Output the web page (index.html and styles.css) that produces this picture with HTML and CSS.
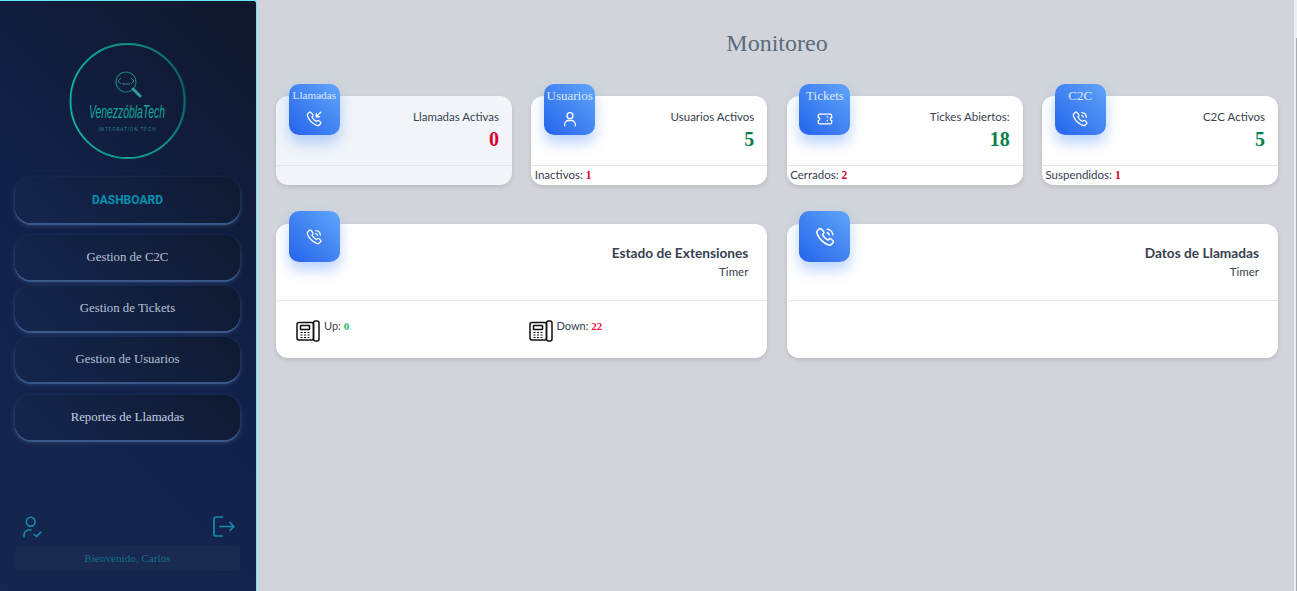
FILE: index.html

```html
<!DOCTYPE html>
<html lang="es">
<head>
  <meta charset="UTF-8" />
  <title>Monitoreo</title>
  <link rel="stylesheet" href="styles.css">
</head>
<body>

  <aside class="sidebar">
    <svg class="logo" viewBox="0 0 120 120" width="120" height="120">
      <defs>
        <linearGradient id="aro" x1="0" y1="0.600" x2="1" y2="0.300">
          <stop offset="0" stop-color="#12c4b4"/>
          <stop offset="0.600" stop-color="#0fa89e"/>
          <stop offset="1" stop-color="#0b5f68"/>
        </linearGradient>
      </defs>
      <circle cx="59.500" cy="58" r="57" fill="none" stroke="url(#aro)" stroke-width="1.800"/>
      <circle cx="60.500" cy="58" r="57.500" fill="none" stroke="#0d5f68" stroke-width="0.600"/>
      <circle cx="58" cy="39" r="10" fill="none" stroke="#0d7f7c" stroke-width="1.200"/>
      <path d="M53 35l-3 3 3 3M63 35l3 3-3 3M54 41h8" fill="none" stroke="#3f9c9c" stroke-width="0.800"/>
      <path d="M65 46l7 7" stroke="#2f9a9a" stroke-width="3" stroke-linecap="round"/>
      <text class="logo-name" x="59" y="75" text-anchor="middle" textLength="76" lengthAdjust="spacingAndGlyphs">VenezzóblaTech</text>
      <text class="logo-sub" x="59" y="88" text-anchor="middle" textLength="57">INTEGRATION TECH</text>
    </svg>

    <nav class="menu">
      <a class="menu-item activo" href="#">DASHBOARD</a>
      <a class="menu-item" href="#">Gestion de C2C</a>
      <a class="menu-item" href="#">Gestion de Tickets</a>
      <a class="menu-item" href="#">Gestion de Usuarios</a>
      <a class="menu-item reportes" href="#">Reportes de Llamadas</a>
    </nav>

    <div class="pie">
      <div class="pie-iconos">
        <svg viewBox="0 0 24 24" width="24" height="24" fill="none" stroke="#0e8fb0" stroke-width="1.600" stroke-linecap="round" stroke-linejoin="round">
          <circle cx="9.700" cy="6.700" r="4.400"/>
          <path d="M3 22v-2a5 5 0 0 1 5-5h2"/>
          <path d="M13 19.500l2.500 2 4.500-4.500"/>
        </svg>
        <svg viewBox="0 0 24 24" width="24" height="24" fill="none" stroke="#0e8fb0" stroke-width="1.700" stroke-linecap="round" stroke-linejoin="round">
          <path d="M10.500 2H4a2 2 0 0 0-2 2v15a2 2 0 0 0 2 2h6.500"/>
          <path d="M8 11.500h14M18 7.500l4 4-4 4"/>
        </svg>
      </div>
      <div class="bienvenido">Bienvenido, Carlos</div>
    </div>
  </aside>

  <main class="contenido">
    <h1 class="titulo">Monitoreo</h1>

    <section class="fila-cuatro">
      <div class="card gris">
        <div class="icono-caja">
          <span class="chico">Llamadas</span>
          <svg class="ico" viewBox="0 0 24 24"><path d="M9.200 4.500 7.600 3.100c-.6-.5-1.400-.5-2 .1L3.900 4.900c-.9.900-1.100 2.200-.6 3.400 2.300 5.500 6.800 10 12.300 12.300 1.200.5 2.500.3 3.400-.6l1.700-1.700c.6-.6.6-1.400.1-2l-2.300-2.100c-.6-.5-1.400-.5-2 0l-1.300 1.200c-2.500-1.200-4.800-3.500-6-6l1.200-1.300c.5-.6.5-1.400 0-2z"/><path d="M21 3l-6 6M15 4.500V9h4.500"/></svg>
        </div>
        <div class="card-top">
          <p class="etiqueta">Llamadas Activas</p>
          <p class="numero rojo">0</p>
        </div>
        <div class="card-pie"></div>
      </div>

      <div class="card">
        <div class="icono-caja">
          <span>Usuarios</span>
          <svg class="ico" viewBox="0 0 24 24"><circle cx="12" cy="7.500" r="4"/><path d="M5 21v-2a5 5 0 0 1 5-5h4a5 5 0 0 1 5 5v2"/></svg>
        </div>
        <div class="card-top">
          <p class="etiqueta">Usuarios Activos</p>
          <p class="numero verde">5</p>
        </div>
        <div class="card-pie">Inactivos: <b class="rojo">1</b></div>
      </div>

      <div class="card">
        <div class="icono-caja">
          <span>Tickets</span>
          <svg class="ico" viewBox="0 0 24 24"><path d="M5 5.500h14a2 2 0 0 1 2 2v2.500a2 2 0 0 0 0 4v2.500a2 2 0 0 1-2 2H5a2 2 0 0 1-2-2V14a2 2 0 0 0 0-4V7.500a2 2 0 0 1 2-2z"/><path d="M15 9v.5M15 14v.5"/></svg>
        </div>
        <div class="card-top">
          <p class="etiqueta">Tickes Abiertos:</p>
          <p class="numero verde">18</p>
        </div>
        <div class="card-pie">Cerrados: <b class="rojo">2</b></div>
      </div>

      <div class="card">
        <div class="icono-caja">
          <span>C2C</span>
          <svg class="ico" viewBox="0 0 24 24"><path d="M9.200 4.500 7.600 3.100c-.6-.5-1.400-.5-2 .1L3.900 4.900c-.9.900-1.100 2.200-.6 3.400 2.300 5.500 6.800 10 12.300 12.300 1.200.5 2.500.3 3.400-.6l1.700-1.700c.6-.6.6-1.400.1-2l-2.300-2.100c-.6-.5-1.400-.5-2 0l-1.300 1.200c-2.500-1.200-4.800-3.500-6-6l1.200-1.300c.5-.6.5-1.400 0-2z"/><path d="M14.500 3.500a6.500 6.500 0 0 1 6 6M14.500 7.500a2.500 2.500 0 0 1 2 2"/></svg>
        </div>
        <div class="card-top">
          <p class="etiqueta">C2C Activos</p>
          <p class="numero verde">5</p>
        </div>
        <div class="card-pie">Suspendidos: <b class="rojo">1</b></div>
      </div>
    </section>

    <section class="fila-dos">
      <div class="card grande">
        <div class="icono-caja solo">
          <svg class="ico" viewBox="0 0 24 24"><path d="M9.200 4.500 7.600 3.100c-.6-.5-1.400-.5-2 .1L3.900 4.900c-.9.900-1.100 2.200-.6 3.400 2.300 5.500 6.800 10 12.300 12.300 1.200.5 2.500.3 3.400-.6l1.700-1.700c.6-.6.6-1.400.1-2l-2.300-2.100c-.6-.5-1.400-.5-2 0l-1.300 1.200c-2.500-1.200-4.800-3.500-6-6l1.200-1.300c.5-.6.5-1.400 0-2z"/><path d="M14.500 3.500a6.500 6.500 0 0 1 6 6M14.500 7.500a2.500 2.500 0 0 1 2 2"/></svg>
        </div>
        <div class="grande-top">
          <p class="grande-titulo">Estado de Extensiones</p>
          <p class="timer">Timer</p>
        </div>
        <div class="grande-pie">
          <div class="extension">
            <svg class="telefono" viewBox="0 0 24 22" width="24" height="22" fill="none" stroke="#111" stroke-width="1.500" stroke-linejoin="round">
              <rect x="1" y="2.500" width="16.500" height="17.500" rx="2"/>
              <rect x="17.500" y="1" width="5.500" height="20" rx="2"/>
              <rect x="4.500" y="5.500" width="9" height="4" rx="0.500"/>
              <path d="M4.500 12.500h2M8 12.500h2M11.500 12.500h2M4.500 15h2M8 15h2M11.500 15h2M4.500 17.500h2M8 17.500h2M11.500 17.500h2" stroke-width="1.200"/>
            </svg>
            <span>Up: <b class="verde-claro">0</b></span>
          </div>
          <div class="extension">
            <svg class="telefono" viewBox="0 0 24 22" width="24" height="22" fill="none" stroke="#111" stroke-width="1.500" stroke-linejoin="round">
              <rect x="1" y="2.500" width="16.500" height="17.500" rx="2"/>
              <rect x="17.500" y="1" width="5.500" height="20" rx="2"/>
              <rect x="4.500" y="5.500" width="9" height="4" rx="0.500"/>
              <path d="M4.500 12.500h2M8 12.500h2M11.500 12.500h2M4.500 15h2M8 15h2M11.500 15h2M4.500 17.500h2M8 17.500h2M11.500 17.500h2" stroke-width="1.200"/>
            </svg>
            <span>Down: <b class="rojo-claro">22</b></span>
          </div>
        </div>
      </div>

      <div class="card grande">
        <div class="icono-caja solo">
          <svg class="ico ico-grande" viewBox="0 0 24 24"><path d="M9.200 4.500 7.600 3.100c-.6-.5-1.400-.5-2 .1L3.900 4.900c-.9.900-1.100 2.200-.6 3.400 2.300 5.500 6.800 10 12.300 12.300 1.200.5 2.500.3 3.400-.6l1.700-1.700c.6-.6.6-1.400.1-2l-2.300-2.100c-.6-.5-1.400-.5-2 0l-1.300 1.200c-2.500-1.200-4.800-3.500-6-6l1.200-1.300c.5-.6.5-1.400 0-2z"/><path d="M14.500 3.500a6.500 6.500 0 0 1 6 6M14.500 7.500a2.500 2.500 0 0 1 2 2"/></svg>
        </div>
        <div class="grande-top">
          <p class="grande-titulo">Datos de Llamadas</p>
          <p class="timer">Timer</p>
        </div>
        <div class="grande-pie"></div>
      </div>
    </section>
  </main>

  <div class="scroll"><div class="scroll-thumb"></div></div>

</body>
</html>
```

FILE: styles.css

```css
* {
  box-sizing: border-box;
}
html, body {
  height: 100%;
}
body {
  margin: 0;
  display: flex;
  height: 591px;
  overflow: hidden;
  background-color: #d1d5db;
  font-family: "Liberation Serif", serif;
}
p {
  margin: 0;
}

.sidebar {
  width: 257px;
  flex-shrink: 0;
  display: flex;
  flex-direction: column;
  padding: 42px 16px 20px 15px;
  background: linear-gradient(45deg, #15274f 0%, #12214a 50%, #0f172a 100%);
  border-top: 1px solid #67e8f9;
  border-right: 1px solid #67e8f9;
  border-top-right-radius: 3px;
}
.logo {
  display: block;
  align-self: center;
  flex-shrink: 0;
  overflow: visible;
}
.logo-name {
  font-family: "Liberation Sans", sans-serif;
  font-style: italic;
  font-size: 18px;
  fill: #12a89c;
}
.logo-sub {
  font-family: "Inter", sans-serif;
  font-size: 4.500px;
  fill: #2a8a90;
}

.menu {
  display: flex;
  flex-direction: column;
  margin-top: 14px;
}
.menu-item {
  display: flex;
  align-items: center;
  justify-content: center;
  height: 45px;
  margin-bottom: 5.750px;
  border-radius: 16px;
  color: #b5c2d6;
  font-size: 12.800px;
  text-decoration: none;
  background: linear-gradient(45deg, #15264f 0%, #0f1a30 100%);
  box-shadow: 0 2px 1px #3b5a8c, 0 2px 5px rgba(96, 140, 200, 0.35);
}
.menu-item.activo {
  height: 46px;
  margin-bottom: 12px;
  color: #0891b2;
  font-family: "Roboto", sans-serif;
  font-size: 12px;
  font-weight: 700;
}
.menu-item.reportes {
  margin-top: 7.500px;
  color: #c3d0e0;
}

.pie {
  margin-top: auto;
}
.pie-iconos {
  display: flex;
  justify-content: space-between;
  padding: 0 4px 0 6px;
}
.bienvenido {
  margin-top: 7px;
  height: 25px;
  line-height: 25px;
  text-align: center;
  color: #0e6f8a;
  font-size: 11.200px;
  background-color: #1a294f;
  border-radius: 3px;
}

.contenido {
  flex: 1;
  min-width: 0;
  padding: 0 16px 0 19px;
}
.titulo {
  margin: 29px 0 39px;
  font-size: 24px;
  font-weight: 400;
  line-height: 28px;
  text-align: center;
  color: #5c6b7c;
}

.scroll {
  width: 3px;
  flex-shrink: 0;
  background-color: #eef0f2;
  padding: 38px 0 0 1.500px;
}
.scroll-thumb {
  height: 100%;
  background-color: #a8aab0;
}

.fila-cuatro {
  display: grid;
  grid-template-columns: repeat(4, 1fr);
  gap: 19.300px;
}
.fila-dos {
  display: grid;
  grid-template-columns: repeat(2, 1fr);
  gap: 19.300px;
  margin-top: 39px;
}

.card {
  position: relative;
  display: flex;
  flex-direction: column;
  height: 89px;
  background-color: #fff;
  border-radius: 12px;
  box-shadow: 0 2px 4px rgba(0, 0, 0, 0.12);
  color: #374151;
  font-family: "Lato", sans-serif;
}
.card.gris {
  background-color: #f1f5f9;
}
.card.grande {
  height: 134px;
}

.icono-caja {
  position: absolute;
  left: 12.800px;
  top: -12px;
  width: 51px;
  height: 51px;
  display: flex;
  flex-direction: column;
  align-items: center;
  padding-top: 3px;
  border-radius: 10px;
  color: #dbeafe;
  background: linear-gradient(to top right, #2563eb, #60a5fa);
  box-shadow: 0 8px 14px rgba(59, 130, 246, 0.35);
  font-family: "Liberation Serif", serif;
  font-size: 13px;
  line-height: 17px;
}
.icono-caja span {
  white-space: nowrap;
}
.icono-caja .chico {
  font-size: 11.200px;
}
.icono-caja.solo {
  top: -13px;
  justify-content: center;
  padding-top: 0;
}
.ico {
  width: 18px;
  height: 18px;
  margin-top: 6px;
  fill: none;
  stroke: #fff;
  stroke-width: 1.700;
  stroke-linecap: round;
  stroke-linejoin: round;
}
.solo .ico {
  margin-top: 0;
}
.solo .ico-grande {
  width: 22px;
  height: 22px;
}

.card-top {
  height: 69.500px;
  padding: 13px 13px 0 0;
  text-align: right;
  border-bottom: 1px solid #e5e7eb;
}
.etiqueta {
  font-size: 11.500px;
  line-height: 16px;
}
.numero {
  margin-top: 3px;
  font-family: "Liberation Serif", serif;
  font-size: 20px;
  font-weight: 700;
  line-height: 23px;
}
.card-pie {
  padding: 0 0 0 3.500px;
  font-size: 11.500px;
  line-height: 17px;
}
.card-pie b {
  font-family: "Liberation Serif", serif;
}

.rojo {
  color: #dc0030;
}
.verde {
  color: #047f4f;
}
.verde-claro {
  color: #22b573;
}
.rojo-claro {
  color: #f0153f;
}

.grande-top {
  height: 77px;
  padding: 20px 19px 0 0;
  text-align: right;
  border-bottom: 1px solid #e5e7eb;
}
.grande-titulo {
  font-size: 13.700px;
  font-weight: 700;
  line-height: 18px;
}
.timer {
  margin-top: 2px;
  font-size: 11.500px;
  line-height: 15px;
}
.grande-pie {
  display: flex;
  padding: 18px 0 0 20px;
}
.extension {
  width: 232.500px;
  display: flex;
  align-items: flex-start;
  gap: 4px;
  font-size: 11px;
  line-height: 15px;
}
.extension span {
  margin-top: -1px;
}
.telefono {
  flex-shrink: 0;
  margin-top: 1px;
}
.extension b {
  font-family: "Liberation Serif", serif;
}
```
